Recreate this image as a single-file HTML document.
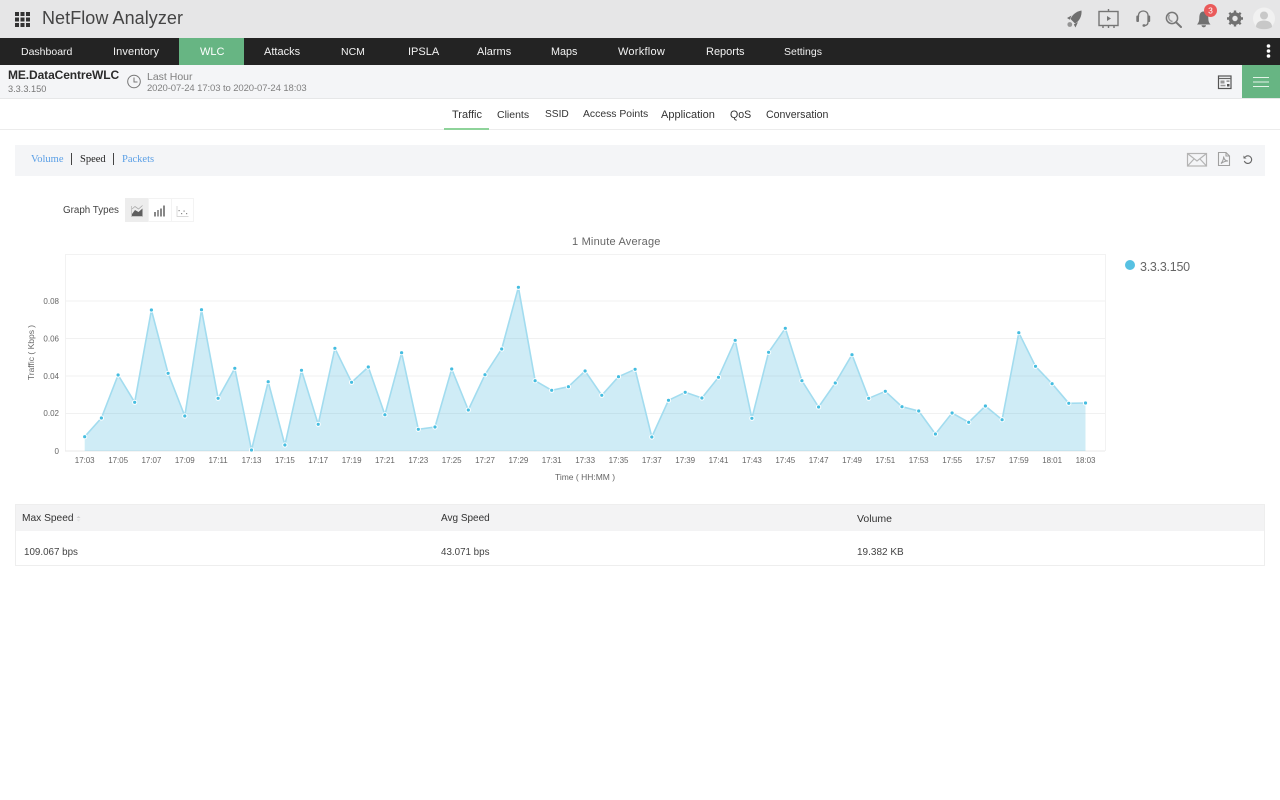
<!DOCTYPE html>
<html>
<head>
<meta charset="utf-8">
<title>NetFlow Analyzer</title>
<style>
html,body{margin:0;padding:0;background:#fff;}
body{width:1280px;height:800px;overflow:hidden;}
#p{position:relative;width:1280px;height:800px;overflow:hidden;font-family:"Liberation Sans",sans-serif;color:#333;filter:blur(.35px);background:#fff;}
.t{position:absolute;white-space:nowrap;line-height:14px;}
.box{position:absolute;}
.nav{top:45px;font-size:11px;color:#f2f2f2;}
.tab{top:107.500px;font-size:11px;color:#333;}
svg{position:absolute;left:0;top:0;overflow:visible;}
</style>
</head>
<body>
<div id="p">
<div class="box" style="left:0;top:0;width:1280px;height:38px;background:#e6e6e7;"></div>
<div class="box" style="left:0;top:38px;width:1280px;height:27px;background:#232323;"></div>
<div class="box" style="left:179px;top:38px;width:65px;height:27px;background:#67b583;"></div>
<div class="box" style="left:0;top:65px;width:1280px;height:33px;background:#f4f5f7;border-bottom:1px solid #e6e7e8;"></div>
<div class="box" style="left:1242px;top:65px;width:38px;height:33px;background:#67b583;"></div>
<div class="box" style="left:0;top:129px;width:1280px;height:1px;background:#ececec;"></div>
<div class="box" style="left:444px;top:128px;width:45px;height:2px;background:#8ed39a;"></div>
<div class="box" style="left:15px;top:145px;width:1250px;height:31px;background:#f4f5f7;"></div>

<span class="t" style="left:42px;top:8px;font-size:18px;line-height:20px;color:#444;letter-spacing:.06px;">NetFlow Analyzer</span>

<span class="t nav" style="left:21px;font-size:10.5px;">Dashboard</span>
<span class="t nav" style="left:113px;letter-spacing:.1px;">Inventory</span>
<span class="t nav" style="left:200px;color:#fff;">WLC</span>
<span class="t nav" style="left:264px;">Attacks</span>
<span class="t nav" style="left:341px;font-size:10.5px;">NCM</span>
<span class="t nav" style="left:408px;">IPSLA</span>
<span class="t nav" style="left:477px;">Alarms</span>
<span class="t nav" style="left:551px;font-size:10.8px;">Maps</span>
<span class="t nav" style="left:618px;letter-spacing:.25px;">Workflow</span>
<span class="t nav" style="left:706px;">Reports</span>
<span class="t nav" style="left:784px;font-size:10.5px;">Settings</span>

<span class="t" style="left:8px;top:68px;font-size:12px;font-weight:bold;color:#2b2b2b;letter-spacing:-.1px;">ME.DataCentreWLC</span>
<span class="t" style="left:8px;top:82px;font-size:9.2px;color:#777;">3.3.3.150</span>
<span class="t" style="left:147px;top:70px;font-size:10.5px;color:#808080;">Last Hour</span>
<span class="t" style="left:147px;top:82px;font-size:9.5px;color:#808080;letter-spacing:-.1px;">2020-07-24 17:03 to 2020-07-24 18:03</span>

<span class="t tab" style="left:452px;">Traffic</span>
<span class="t tab" style="left:497px;font-size:10.5px;">Clients</span>
<span class="t tab" style="left:545px;font-size:10.2px;">SSID</span>
<span class="t tab" style="left:583px;font-size:10.4px;">Access Points</span>
<span class="t tab" style="left:661px;">Application</span>
<span class="t tab" style="left:730px;font-size:10.6px;">QoS</span>
<span class="t tab" style="left:766px;font-size:10.6px;">Conversation</span>

<span class="t" style="left:31px;top:152.500px;font-family:'Liberation Serif',serif;font-size:10.5px;color:#5a9fe6;">Volume</span>
<span class="box" style="left:71px;top:153px;width:1px;height:12px;background:#444;"></span>
<span class="t" style="left:80px;top:152.500px;font-family:'Liberation Serif',serif;font-size:10.5px;color:#222;">Speed</span>
<span class="box" style="left:113px;top:153px;width:1px;height:12px;background:#444;"></span>
<span class="t" style="left:122px;top:152.500px;font-family:'Liberation Serif',serif;font-size:10.5px;color:#5a9fe6;">Packets</span>

<span class="t" style="left:63px;top:204px;font-size:9.8px;color:#444;">Graph Types</span>
<div class="box" style="left:125px;top:198px;width:23px;height:24px;background:#ededed;"></div>
<div class="box" style="left:148px;top:198px;width:22px;height:22px;border:1px solid #f3f3f3;"></div>
<div class="box" style="left:171px;top:198px;width:21px;height:22px;border:1px solid #f3f3f3;"></div>

<span class="t" style="left:572px;top:235px;font-size:11px;color:#666;letter-spacing:.2px;">1 Minute Average</span>
<span class="t" style="left:1140px;top:259px;font-size:12.500px;line-height:16px;color:#666;letter-spacing:-.25px;">3.3.3.150</span>
<div class="box" style="left:1125px;top:260px;width:10px;height:10px;border-radius:50%;background:#57c1e2;"></div>

<div class="box" style="left:15px;top:504px;width:1248px;height:60px;border:1px solid #eeeeee;"></div>
<div class="box" style="left:16px;top:505px;width:1248px;height:26px;background:#f3f3f4;"></div>
<span class="t" style="left:22px;top:512px;font-size:10.2px;color:#333;">Max Speed</span>
<span class="t" style="left:441px;top:512px;font-size:10px;color:#333;">Avg Speed</span>
<span class="t" style="left:857px;top:512px;font-size:10.5px;color:#333;">Volume</span>
<span class="t" style="left:24px;top:546px;font-size:9.8px;color:#444;">109.067 bps</span>
<span class="t" style="left:441px;top:546px;font-size:9.8px;color:#444;">43.071 bps</span>
<span class="t" style="left:857px;top:546px;font-size:10px;color:#444;">19.382 KB</span>

<svg width="1280" height="800" viewBox="0 0 1280 800" xmlns="http://www.w3.org/2000/svg">
  <defs>
    <marker id="dot" markerUnits="userSpaceOnUse" markerWidth="8" markerHeight="8" refX="4" refY="4">
      <circle cx="4" cy="4" r="2.1" fill="#45bde0" stroke="#fff" stroke-width="1"/>
    </marker>
  </defs>

  <!-- waffle -->
  <g fill="#333">
    <rect x="15" y="12" width="4" height="4"/><rect x="20.5" y="12" width="4" height="4"/><rect x="26" y="12" width="4" height="4"/>
    <rect x="15" y="17.5" width="4" height="4"/><rect x="20.5" y="17.5" width="4" height="4"/><rect x="26" y="17.5" width="4" height="4"/>
    <rect x="15" y="23" width="4" height="4"/><rect x="20.5" y="23" width="4" height="4"/><rect x="26" y="23" width="4" height="4"/>
  </g>

  <!-- rocket -->
  <path d="M1081.500 10.500C1076 11.500 1072.500 14.500 1070.500 19L1075 23.500C1079.500 21 1082 16 1081.500 10.500Z" fill="#6f6f6f"/>
  <path d="M1071.500 15.500L1067 18L1069.800 19.800ZM1078 22L1075.500 27.500L1073.800 24.500Z" fill="#6f6f6f"/>
  <circle cx="1069.800" cy="24.500" r="2.400" fill="#949494"/>
  <!-- presentation -->
  <g fill="none" stroke="#757575" stroke-width="1.400">
    <rect x="1099" y="11.500" width="19" height="14"/>
    <path d="M1108.500 9V11.500M1103 25.500V28M1108.500 25.500V28M1114 25.500V28"/>
  </g>
  <path d="M1107 16L1111 18.500L1107 21Z" fill="#757575"/>
  <!-- headset -->
  <path d="M1138.500 17V15.500C1138.500 9.500 1148 9.500 1148 15.500V22C1148 24.500 1146.500 25.500 1144.500 25.500" fill="none" stroke="#757575" stroke-width="1.300"/>
  <rect x="1136.300" y="15.500" width="2.700" height="6.500" rx="1" fill="#757575"/>
  <rect x="1147.500" y="15.500" width="2.700" height="6.500" rx="1" fill="#757575"/>
  <rect x="1142.500" y="24.300" width="3" height="2.400" rx="1" fill="#757575"/>
  <!-- search -->
  <circle cx="1172" cy="18" r="5.600" fill="none" stroke="#777" stroke-width="1.500"/>
  <path d="M1169.500 14.800C1167.800 17 1168.800 20.800 1172.500 21.500" fill="none" stroke="#999" stroke-width="1.400"/>
  <path d="M1176 22.200L1181 27" stroke="#777" stroke-width="2" stroke-linecap="round"/>
  <!-- bell -->
  <path d="M1203.500 11.500C1200 11.500 1199.300 15 1199.300 18C1199.300 21 1198.500 23 1197 24.500H1210.500C1209 23 1208.300 21 1208.300 18C1208.300 15 1207.500 11.500 1203.500 11.500Z" fill="#707070"/>
  <path d="M1201.500 25.300H1206C1206 28 1201.500 28 1201.500 25.300Z" fill="#707070"/>
  <circle cx="1210.500" cy="10.500" r="6.500" fill="#ea5a5a"/>
  <text x="1210.500" y="13.500" font-size="8.500" fill="#fff" text-anchor="middle" font-family="Liberation Sans, sans-serif">3</text>
  <!-- gear -->
  <circle cx="1235" cy="18.500" r="4.800" fill="none" stroke="#707070" stroke-width="3"/>
  <path d="M1235 10.500V26.500M1227 18.500H1243M1229.300 12.800L1240.700 24.200M1240.700 12.800L1229.300 24.200" stroke="#707070" stroke-width="2.400"/>
  <circle cx="1235" cy="18.500" r="2.700" fill="#e6e6e7"/>
  <!-- avatar -->
  <circle cx="1264" cy="18.500" r="11" fill="#f1f1f1"/>
  <circle cx="1264" cy="15.500" r="4" fill="#c8c8c8"/>
  <path d="M1256 27C1256 22 1260 20.500 1264 20.500C1268 20.500 1272 22 1272 27C1268 30 1260 30 1256 27Z" fill="#c8c8c8"/>

  <!-- kebab -->
  <g fill="#fff"><circle cx="1268.500" cy="46" r="1.800"/><circle cx="1268.500" cy="51" r="1.800"/><circle cx="1268.500" cy="56" r="1.800"/></g>

  <!-- clock -->
  <circle cx="134" cy="81.500" r="6.300" fill="none" stroke="#777" stroke-width="1"/>
  <path d="M134 77.500V82H137.500" fill="none" stroke="#777" stroke-width="1"/>

  <!-- dashboard tile icon -->
  <rect x="1218.500" y="76" width="12.500" height="12.500" fill="#f4f5f7" stroke="#555" stroke-width="1.200"/>
  <path d="M1219 78.500H1231" stroke="#666" stroke-width="1.200"/>
  <rect x="1220.500" y="80.500" width="4" height="3" fill="#999"/>
  <rect x="1220.500" y="84.800" width="5" height="1.500" fill="#999"/>
  <rect x="1226.500" y="80.500" width="3" height="1.200" fill="#777"/>
  <rect x="1227" y="84" width="2.500" height="2.500" fill="#555"/>

  <!-- hamburger -->
  <path d="M1253 77.500H1269M1253 82H1269M1253 86.500H1269" stroke="#e4f3e8" stroke-width="1.100"/>

  <!-- mail / pdf / refresh -->
  <g fill="none" stroke="#b4b4b4" stroke-width="1.200">
    <rect x="1187.500" y="153.500" width="19" height="12.500"/>
    <path d="M1187.500 153.500L1197 161L1206.500 153.500M1187.500 166L1194 159M1206.500 166L1200 159"/>
  </g>
  <g fill="none" stroke="#a0a0a0" stroke-width="1.100">
    <path d="M1218.500 152.500H1226L1229.500 156V165.500H1218.500Z"/>
    <path d="M1226 152.500V156H1229.500"/>
    <path d="M1221 163.500C1223 161 1224 158 1223.500 156.500C1224 159.500 1225.500 161 1228 161C1225.500 161 1223 162 1221 163.500Z"/>
  </g>
  <path d="M1245.300 156.800A3.800 3.800 0 1 1 1244.300 161" fill="none" stroke="#666" stroke-width="1.100"/>
  <path d="M1243.500 155.500V158.500H1246.500Z" fill="#666"/>

  <!-- graph type icons -->
  <g>
    <path d="M131.500 206V216.500H143" fill="none" stroke="#bbb" stroke-width=".8"/>
    <path d="M132 214L135 210L138.500 212L142.500 208.500V216H132Z" fill="#5f5f5f"/>
    <path d="M132 209L135 206.500L138.500 209L142.500 205.500" fill="none" stroke="#aaa" stroke-width=".8"/>
    <g fill="#888"><rect x="154" y="212" width="2" height="4.500"/><rect x="157" y="210" width="2" height="6.500" fill="#999"/><rect x="160" y="208.500" width="2" height="8"/><rect x="163" y="205.500" width="2" height="11"/></g>
    <path d="M177 206V216.500H188.500" fill="none" stroke="#ccc" stroke-width=".7"/>
    <g fill="#888"><rect x="178.500" y="210" width="1.200" height="1.200"/><rect x="181" y="213" width="1.200" height="1.200"/><rect x="183.500" y="210.500" width="1.200" height="1.200"/><rect x="186" y="213" width="1.200" height="1.200"/></g>
  </g>

  <!-- chart frame and grid -->
  <path d="M65.500 451V254.500H1105.500V451" fill="none" stroke="#f2f2f2" stroke-width="1"/>
  <g stroke="#f1f1f1" stroke-width="1">
    <path d="M65 301H1105M65 338.500H1105M65 376H1105M65 413.500H1105"/>
    <path d="M65 451H1105" stroke="#e9e9e9"/>
  </g>

  <!-- area -->
  <path fill="#45b4dc" fill-opacity=".26" d="M84.700 451L84.700 436.700 101.400 418 118.100 375 134.700 402.300 151.400 310 168.100 373.300 184.800 416 201.500 309.700 218.100 398.300 234.800 368.300 251.500 450 268.200 381.700 284.900 445 301.500 370.300 318.200 424.300 334.900 348.300 351.600 382.300 368.300 367 384.900 414.700 401.600 352.700 418.300 429.300 435 427 451.700 369 468.300 410 485 374.700 501.700 349 518.400 287.300 535.100 380.700 551.700 390.300 568.400 386.700 585.100 371 601.800 395.300 618.500 376.700 635.100 369.300 651.800 437 668.500 400.300 685.200 392.300 701.900 398 718.500 377.300 735.200 340.300 751.900 418.300 768.600 352.300 785.300 328.300 801.900 380.700 818.600 407 835.300 383 852 354.700 868.700 398.300 885.300 391.300 902 406.700 918.700 411 935.400 434 952.100 413 968.700 422.300 985.400 406 1002.100 419.700 1018.800 332.700 1035.500 366.300 1052.100 383.700 1068.800 403.300 1085.500 403 1085.500 451Z"/>
  <polyline fill="none" stroke="#a2dcef" stroke-width="1.600" stroke-linejoin="round" marker-start="url(#dot)" marker-mid="url(#dot)" marker-end="url(#dot)" points="84.700,436.700 101.400,418 118.100,375 134.700,402.300 151.400,310 168.100,373.300 184.800,416 201.500,309.700 218.100,398.300 234.800,368.300 251.500,450 268.200,381.700 284.900,445 301.500,370.300 318.200,424.300 334.900,348.300 351.600,382.300 368.300,367 384.900,414.700 401.600,352.700 418.300,429.300 435,427 451.700,369 468.300,410 485,374.700 501.700,349 518.400,287.300 535.100,380.700 551.700,390.300 568.400,386.700 585.100,371 601.800,395.300 618.500,376.700 635.100,369.300 651.800,437 668.500,400.300 685.200,392.300 701.900,398 718.500,377.300 735.200,340.300 751.900,418.300 768.600,352.300 785.300,328.300 801.900,380.700 818.600,407 835.300,383 852,354.700 868.700,398.300 885.300,391.300 902,406.700 918.700,411 935.400,434 952.100,413 968.700,422.300 985.400,406 1002.100,419.700 1018.800,332.700 1035.500,366.300 1052.100,383.700 1068.800,403.300 1085.500,403"/>

  <!-- axis labels -->
  <g font-family="Liberation Sans, sans-serif" font-size="8px" fill="#666" text-anchor="end">
    <text x="59" y="304">0.08</text><text x="59" y="341.500">0.06</text><text x="59" y="379">0.04</text><text x="59" y="416">0.02</text><text x="59" y="454">0</text>
  </g>
  <text transform="translate(34,352.500) rotate(-90)" font-family="Liberation Sans, sans-serif" font-size="8.500px" fill="#666" text-anchor="middle">Traffic ( Kbps )</text>
  <text x="585" y="480" font-family="Liberation Sans, sans-serif" font-size="8.500px" fill="#666" text-anchor="middle">Time ( HH:MM )</text>
  <g font-family="Liberation Sans, sans-serif" font-size="8px" fill="#666" text-anchor="middle" letter-spacing="-.05">
    <text x="84.700" y="463">17:03</text><text x="118.100" y="463">17:05</text><text x="151.400" y="463">17:07</text><text x="184.800" y="463">17:09</text><text x="218.100" y="463">17:11</text><text x="251.500" y="463">17:13</text><text x="284.900" y="463">17:15</text><text x="318.200" y="463">17:17</text><text x="351.600" y="463">17:19</text><text x="384.900" y="463">17:21</text><text x="418.300" y="463">17:23</text><text x="451.700" y="463">17:25</text><text x="485" y="463">17:27</text><text x="518.400" y="463">17:29</text><text x="551.700" y="463">17:31</text><text x="585.100" y="463">17:33</text><text x="618.500" y="463">17:35</text><text x="651.800" y="463">17:37</text><text x="685.200" y="463">17:39</text><text x="718.500" y="463">17:41</text><text x="751.900" y="463">17:43</text><text x="785.300" y="463">17:45</text><text x="818.600" y="463">17:47</text><text x="852" y="463">17:49</text><text x="885.300" y="463">17:51</text><text x="918.700" y="463">17:53</text><text x="952.100" y="463">17:55</text><text x="985.400" y="463">17:57</text><text x="1018.800" y="463">17:59</text><text x="1052.100" y="463">18:01</text><text x="1085.500" y="463">18:03</text>
  </g>

  <!-- sort arrows -->
  <path d="M76.500 518L78.500 516L80.500 518Z" fill="#d0d0d0"/>
  <path d="M76.500 519.500L78.500 521.500L80.500 519.500Z" fill="#e4e4e4"/>
</svg>
</div>
</body>
</html>
